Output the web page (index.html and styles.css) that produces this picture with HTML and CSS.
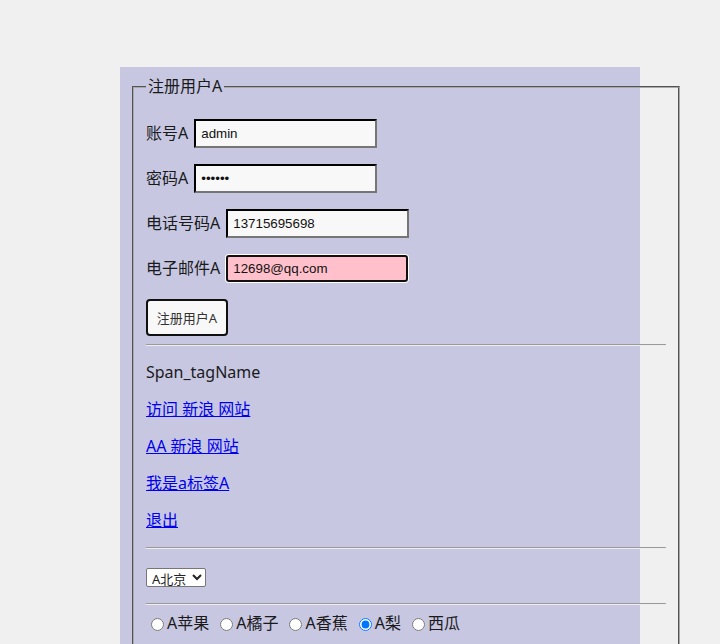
FILE: index.html
```html
<!DOCTYPE html>
<html lang="zh">
<head>
<meta charset="utf-8">
<title>注册用户A</title>
<link rel="stylesheet" href="styles.css">
</head>
<body>
<div class="panel">
  <fieldset class="reg">
    <legend>注册用户A</legend>
    <p class="row">账号A <input class="field" type="text" value="admin"></p>
    <p class="row">密码A <input class="field" type="password" value="123456"></p>
    <p class="row">电话号码A <input class="field" type="text" value="13715695698"></p>
    <p class="row">电子邮件A <input class="field field-focus" type="text" value="12698@qq.com"></p>
    <div class="btn-row"><button class="btn" type="button">注册用户A</button></div>
    <hr class="rule">
    <p class="line"><span>Span_tagName</span></p>
    <p class="line"><a href="#">访问 新浪 网站</a></p>
    <p class="line"><a href="#">AA 新浪 网站</a></p>
    <p class="line"><a href="#">我是a标签A</a></p>
    <p class="line"><a href="#">退出</a></p>
    <hr class="rule">
    <p class="line sel-line"><select class="city"><option>A北京</option><option>A上海</option></select></p>
    <hr class="rule">
    <div class="radios">
      <label class="opt"><input type="radio" name="fruit">A苹果</label>
      <label class="opt"><input type="radio" name="fruit">A橘子</label>
      <label class="opt"><input type="radio" name="fruit">A香蕉</label>
      <label class="opt"><input type="radio" name="fruit" checked>A梨</label>
      <label class="opt"><input type="radio" name="fruit">西瓜</label>
    </div>
  </fieldset>
</div>
</body>
</html>
```

FILE: styles.css
```css
html, body {
  margin: 0;
  padding: 0;
  background: #f0f0f0;
  height: 100%;
  overflow: hidden;
}
body {
  font-family: "Noto Sans", "Noto Sans CJK SC", sans-serif;
  font-size: 16px;
  color: #1a1a1a;
}
.panel {
  width: 520px;
  margin: 67px 0 0 120px;
  padding: 9px 0 0 0;
  background: #c7c7e2;
  min-height: 700px;
  box-sizing: border-box;
}
.reg {
  width: 520px;
  margin: 0 0 0 12px;
  padding: 5.6px 12px 10px 12px;
  border: 2px groove #a8a8a8;
}
.reg legend {
  padding: 0 2px;
  line-height: 21px;
}
.row {
  margin: 16px 0;
  height: 29px;
  line-height: 29px;
  display: flex;
  align-items: center;
  gap: 6px;
}
.field {
  width: 183px;
  height: 29px;
  box-sizing: border-box;
  border: 2px inset #767676;
  border-color: #2a2a2a #767676 #767676 #2a2a2a;
  background: #f8f8f8;
  padding: 1px 5px;
  font-family: "Liberation Sans", Arial, sans-serif;
  font-size: 13.33px;
  color: #111;
  margin: 0;
}
.field-focus {
  background: #ffc0cb;
  border: 2px solid #101010;
  border-radius: 3px;
  box-shadow: 0 0 0 1px #fff;
  width: 182px;
  height: 27px;
  margin-left: 0;
}
.btn-row {
  margin: 16px 0 0 0;
  height: 37px;
}
.btn {
  height: 37px;
  width: 82px;
  border: 2px solid #101010;
  border-radius: 4px;
  background: #f8f8f8;
  font-family: "Noto Sans", "Noto Sans CJK SC", sans-serif;
  font-size: 13px;
  color: #333;
  padding: 0;
}
.rule {
  margin: 8px 0;
  border: 0;
  border-top: 1px solid #9a9a9a;
  border-bottom: 1px solid #eeeeee;
  height: 0;
}
.line {
  margin: 16px 0;
  line-height: 21px;
}
.line a {
  color: #0000ee;
  text-decoration: underline;
}
.sel-line {
  height: 22px;
}
.city {
  font-family: "Noto Sans", "Noto Sans CJK SC", sans-serif;
  font-size: 13px;
  height: 19px;
  padding: 0 0 0 1px;
  border: 1px solid #767676;
  border-radius: 2px;
  background: #fff;
  color: #222;
  vertical-align: top;
  margin-top: 3px;
  width: 60px;
}
.radios {
  margin: 8px 0 0 0;
  line-height: 21px;
  display: flex;
  gap: 6px;
}
.opt {
  display: inline-flex;
  align-items: center;
}
.opt input {
  margin: 3px 3px 0 5px;
}
```
